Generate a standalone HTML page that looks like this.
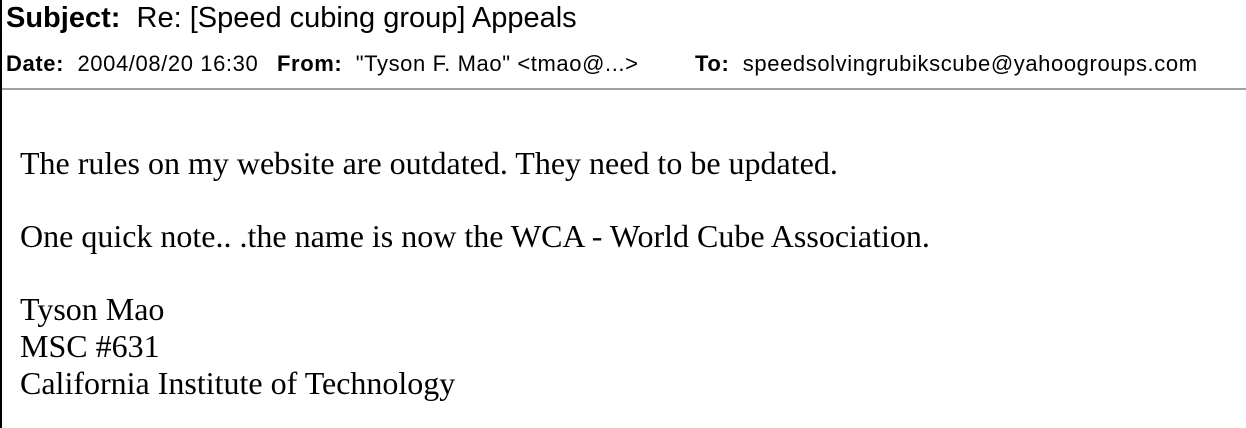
<!DOCTYPE html>
<html><head><meta charset="utf-8"><style>
html,body{margin:0;padding:0;background:#fff;width:1246px;height:428px;overflow:hidden;position:relative}
.l{position:absolute;left:0;top:0;width:2px;height:428px;background:#000}
.h{position:absolute;left:2px;top:88px;width:1244px;height:2px;background:#a0a0a0}
.s{position:absolute;left:6px;top:1px;font:29px "Liberation Sans",sans-serif;white-space:nowrap;line-height:34px}
.d{position:absolute;top:50px;font:22px "Liberation Sans",sans-serif;white-space:nowrap;line-height:28px;letter-spacing:0.6px}
.b{position:absolute;left:20px;font:32px "Liberation Serif",serif;white-space:nowrap;line-height:37px}
</style></head><body>
<div class="l"></div><div class="h"></div>
<div class="s"><b>Subject:</b>&nbsp; Re: [Speed cubing group] Appeals</div>
<div class="d" style="left:6px"><b>Date:</b>&nbsp; 2004/08/20 16:30</div>
<div class="d" style="left:277px"><b>From:</b>&nbsp; "Tyson F. Mao" &lt;tmao@...&gt;</div>
<div class="d" style="left:695px"><b>To:</b>&nbsp; speedsolvingrubikscube@yahoogroups.com</div>
<div class="b" style="top:145px">The rules on my website are outdated. They need to be updated.</div>
<div class="b" style="top:218px">One quick note.. .the name is now the WCA - World Cube Association.</div>
<div class="b" style="top:291px">Tyson Mao<br>MSC #631<br>California Institute of Technology</div>
</body></html>
